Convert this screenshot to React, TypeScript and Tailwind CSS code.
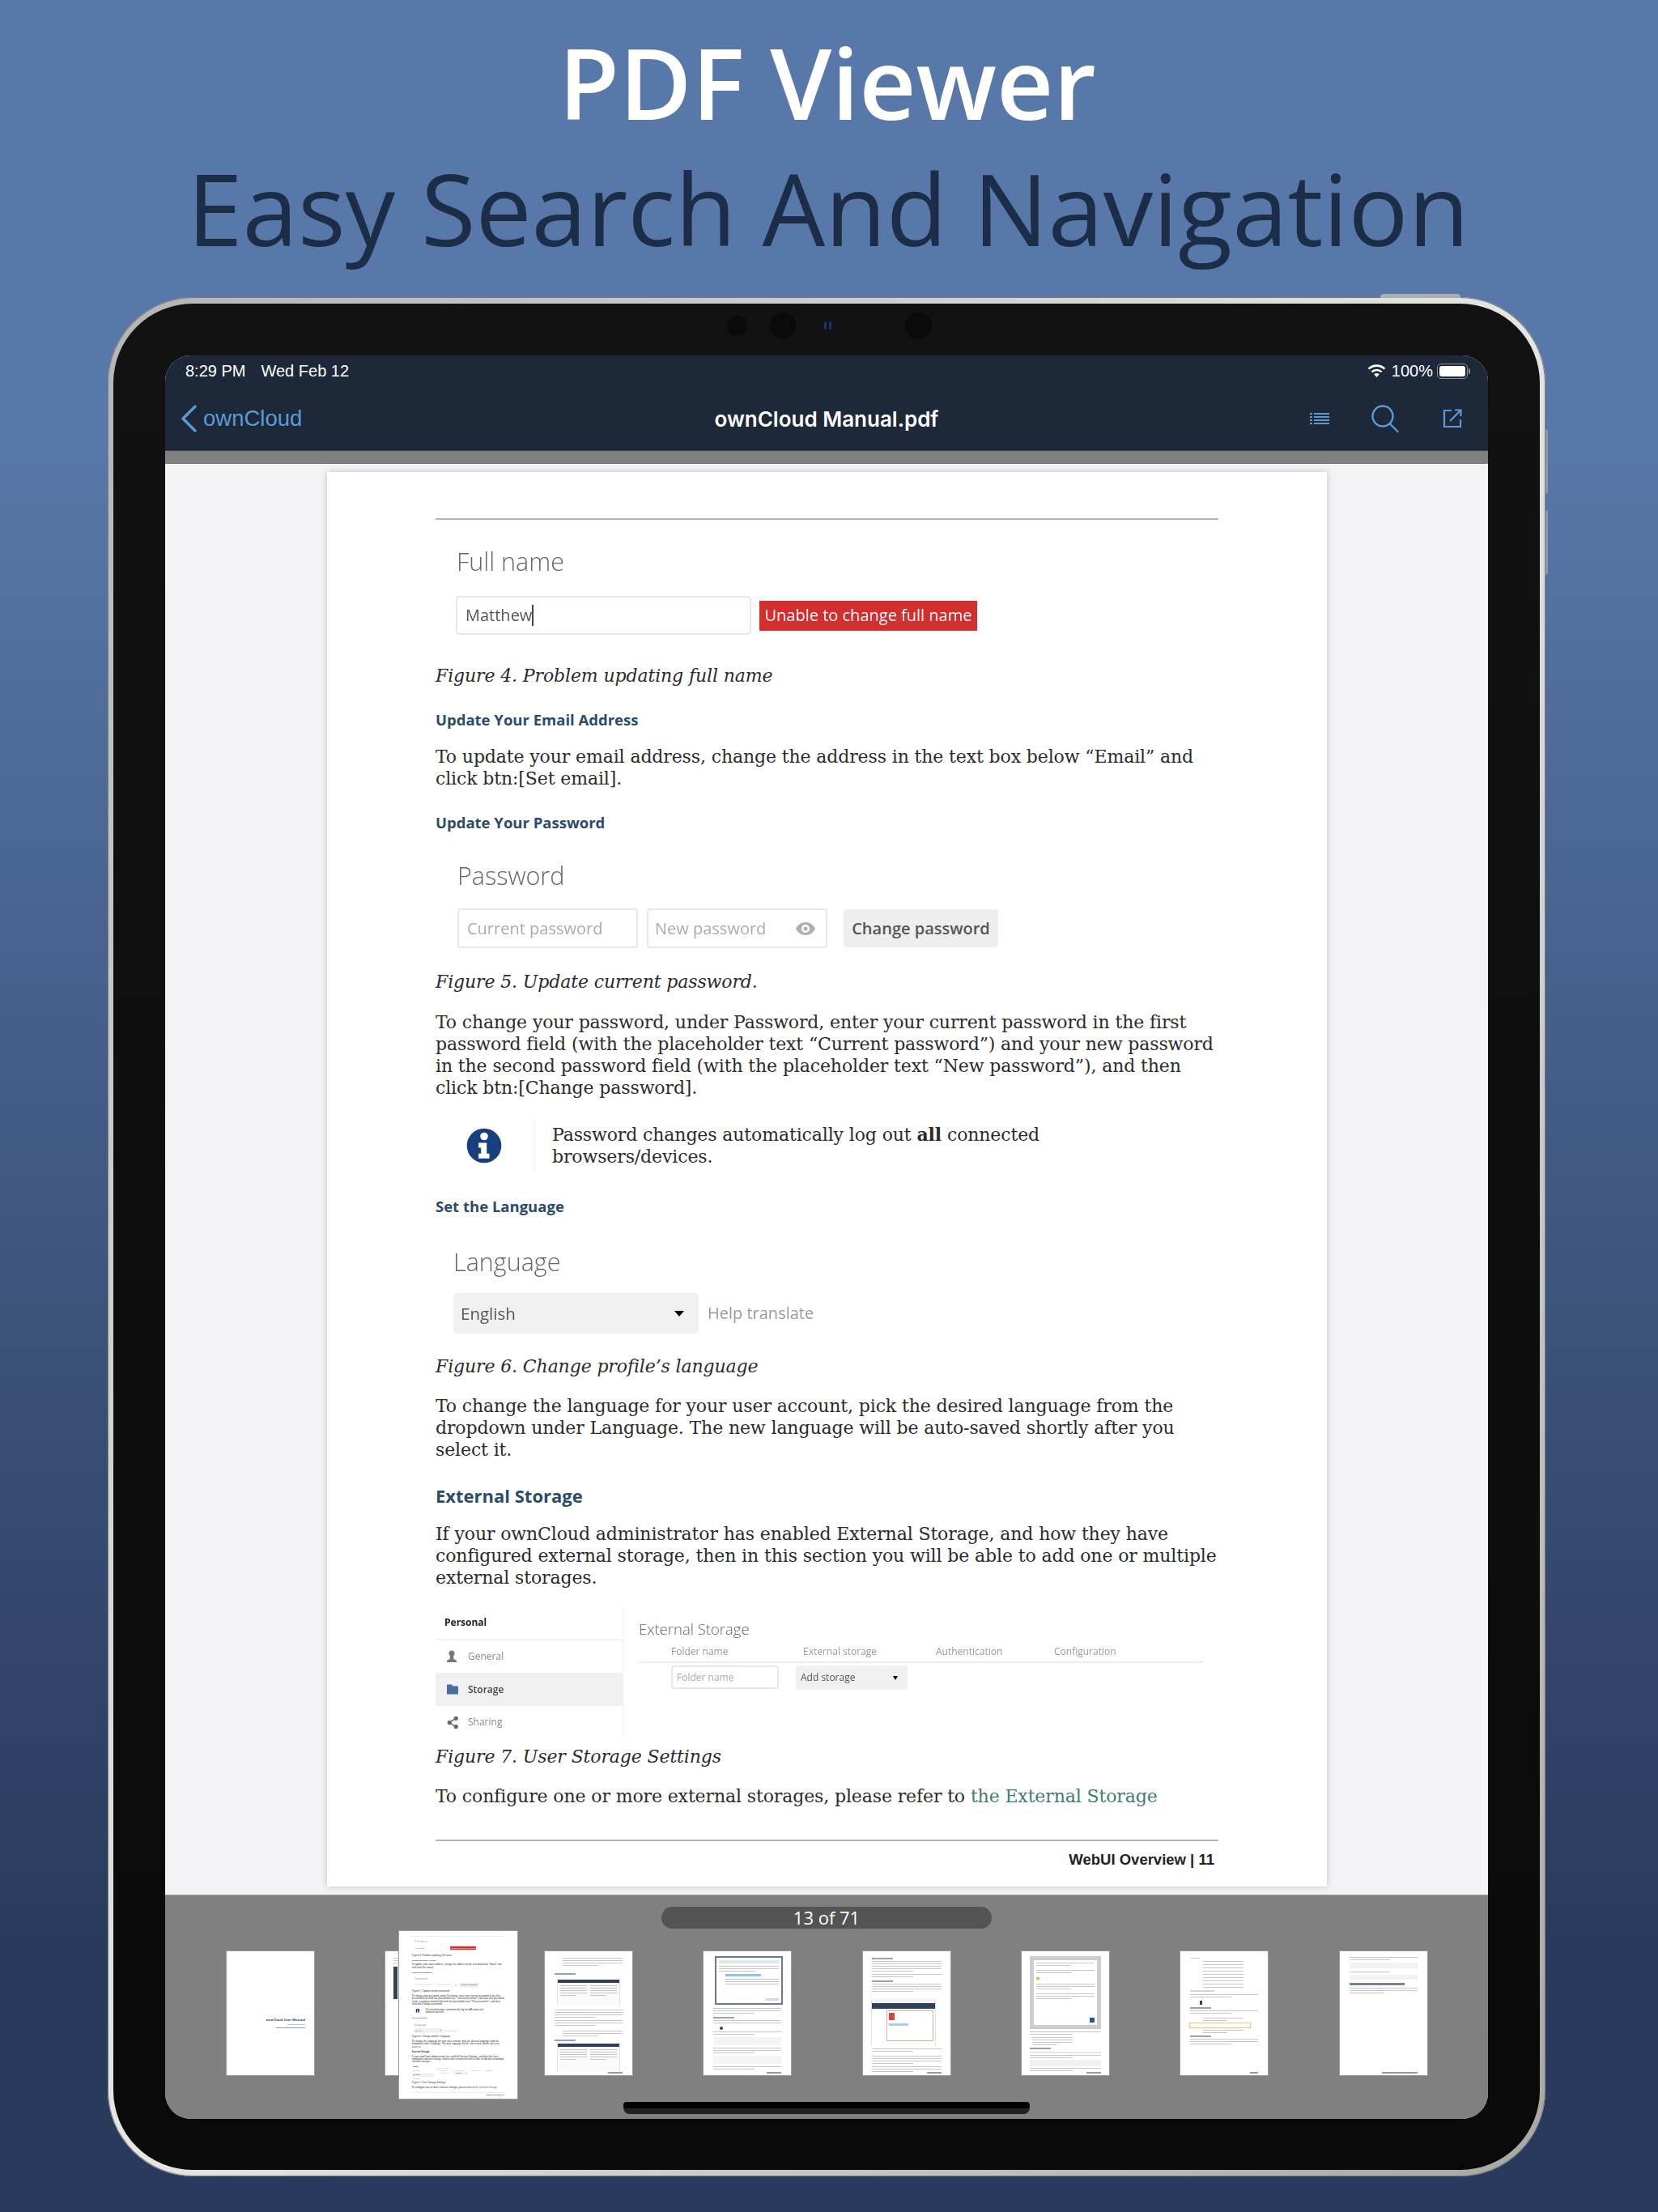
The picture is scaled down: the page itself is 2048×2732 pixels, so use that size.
const serif = 'font-["DejaVu_Serif",serif]'
const sans = 'font-["Open_Sans",sans-serif]'
const ui = "font-['Liberation_Sans',sans-serif]"

function Caption({ children, className = '' }: { children: string; className?: string }) {
  return <p className={`${serif} italic text-[22px] leading-[27px] tracking-[-0.12px] text-[#2b2b2b] ${className}`}>{children}</p>
}

function Para({ children, className = '' }: { children: React.ReactNode; className?: string }) {
  return <p className={`${serif} text-[22px] leading-[27px] tracking-[-0.12px] text-[#2b2b2b] ${className}`}>{children}</p>
}

function SubHead({ children, className = '' }: { children: string; className?: string }) {
  return <h4 className={`${sans} font-bold text-[18.500px] leading-[26px] text-[#2b4c69] ${className}`}>{children}</h4>
}

function FormTitle({ children, className = '' }: { children: string; className?: string }) {
  return <div className={`${sans} font-light text-[30.500px] leading-[44px] text-[#666] blur-[0.3px] ${className}`}>{children}</div>
}

function FieldBox({ children, className = '' }: { children: React.ReactNode; className?: string }) {
  return (
    <div className={`flex items-center border-2 border-[#e8e8e8] rounded bg-white ${className}`}>
      {children}
    </div>
  )
}

function DocPage() {
  return (
    <div className="w-[1235px] h-[1747px] bg-white pt-[57px] pl-[134px] pr-[134px] flex flex-col">
      <div className="h-[2px] bg-[#b5b5b5]" />

      <FormTitle className="mt-[29px] ml-[26px]">Full name</FormTitle>
      <div className="flex items-center mt-[21px] ml-[25px] blur-[0.3px]">
        <FieldBox className={`w-[365px] h-[48px] pl-[10px] ${sans} text-[20px] text-[#555]`}>
          <span>Matthew</span>
          <span className="w-[2px] h-[26px] bg-[#444]" />
        </FieldBox>
        <div className={`ml-[10px] w-[269px] h-[37px] bg-[#d32f2f] flex items-center justify-center whitespace-nowrap ${sans} font-medium text-[20px] text-white`}>
          Unable to change full name
        </div>
      </div>

      <Caption className="mt-[37px]">Figure 4. Problem updating full name</Caption>
      <SubHead className="mt-[28px]">Update Your Email Address</SubHead>
      <Para className="mt-[19px]">
        To update your email address, change the address in the text box below “Email” and<br />
        click btn:[Set email].
      </Para>
      <SubHead className="mt-[28px]">Update Your Password</SubHead>

      <FormTitle className="mt-[30px] ml-[27px]">Password</FormTitle>
      <div className="flex items-center mt-[19px] ml-[27px] blur-[0.3px]">
        <FieldBox className={`w-[223px] h-[49px] pl-[10px] ${sans} text-[20px] text-[#aaa]`}>Current password</FieldBox>
        <FieldBox className={`ml-[11px] w-[223px] h-[49px] pl-[8px] pr-[13px] justify-between ${sans} text-[20px] text-[#aaa]`}>
          <span>New password</span>
          <svg viewBox="0 0 24 16" className="w-[24px] h-[16px]" fill="#b0b0b0">
            <path d="M12 0C6.500 0 2.200 3.400 0 8c2.200 4.600 6.500 8 12 8s9.800-3.400 12-8c-2.200-4.600-6.500-8-12-8zm0 13a5 5 0 1 1 0-10 5 5 0 0 1 0 10zm0-7.500a2.500 2.500 0 1 0 0 5 2.500 2.500 0 0 0 0-5z" />
          </svg>
        </FieldBox>
        <div className={`ml-[20px] w-[191px] h-[47px] rounded bg-[#eeeeee] flex items-center justify-center ${sans} font-semibold text-[20px] text-[#555]`}>
          Change password
        </div>
      </div>

      <Caption className="mt-[28px]">Figure 5. Update current password.</Caption>
      <Para className="mt-[23px]">
        To change your password, under Password, enter your current password in the first<br />
        password field (with the placeholder text “Current password”) and your new password<br />
        in the second password field (with the placeholder text “New password”), and then<br />
        click btn:[Change password].
      </Para>

      <div className="flex items-center mt-[24px] h-[68px]">
        <svg viewBox="0 0 512 512" className="ml-[38px] w-[44px] h-[44px]" fill="#193f7e" fillRule="evenodd">
          <path d="M8 256a248 248 0 1 0 496 0 248 248 0 1 0-496 0zM256 66a56 56 0 1 1 0 112 56 56 0 0 1 0-112zM176 214h118v156h38v70H176v-70h36v-86h-36z" />
        </svg>
        <div className="ml-[39px] w-px self-stretch bg-[#eeeeee]" />
        <Para className="ml-[22px]">
          Password changes automatically log out <b>all</b> connected<br />
          browsers/devices.
        </Para>
      </div>

      <SubHead className="mt-[28px]">Set the Language</SubHead>

      <FormTitle className="mt-[33px] ml-[22px]">Language</FormTitle>
      <div className="flex items-center mt-[17px] ml-[22px] blur-[0.3px]">
        <div className={`w-[303px] h-[50px] rounded bg-[#f0f0f0] flex items-center justify-between pl-[9px] pr-[18px] ${sans} text-[20.500px] text-[#555]`}>
          <span>English</span>
          <span className="border-x-[6px] border-x-transparent border-t-[7px] border-t-black" />
        </div>
        <span className={`ml-[11px] ${sans} text-[20px] text-[#999]`}>Help translate</span>
      </div>

      <Caption className="mt-[27px]">Figure 6. Change profile’s language</Caption>
      <Para className="mt-[22px]">
        To change the language for your user account, pick the desired language from the<br />
        dropdown under Language. The new language will be auto-saved shortly after you<br />
        select it.
      </Para>
      <h3 className={`mt-[27px] ${sans} font-bold text-[22px] leading-[32px] text-[#2b4c69]`}>External Storage</h3>
      <Para className="mt-[18px]">
        If your ownCloud administrator has enabled External Storage, and how they have<br />
        configured external storage, then in this section you will be able to add one or multiple<br />
        external storages.
      </Para>

      <div className={`flex mt-[21px] h-[164px] blur-[0.3px] ${sans}`}>
        <div className="w-[232px] border-r border-[#f0f0f0] flex flex-col text-[12px]">
          <div className="h-[43px] pl-[11px] pt-[12px] font-bold text-[12px] text-[#222] border-b-2 border-[#f4f4f4]">Personal</div>
          <div className="h-[40px] flex items-center pl-[14px] gap-[14px] text-[#888]">
            <svg viewBox="0 0 12 16" className="w-[12px] h-[16px]" fill="#777"><circle cx="6" cy="4" r="3.500" /><path d="M4 7h4l.500 4 3.500 2v2H0v-2l3.500-2z" /></svg>
            General
          </div>
          <div className="h-[41px] bg-[#f0f0f0] flex items-center pl-[14px] gap-[12px] font-semibold text-[#444]">
            <svg viewBox="0 0 14 12" className="w-[14px] h-[13px]" fill="#4a6d9d"><path d="M0 0h6l1.500 2H14v10H0z" /></svg>
            Storage
          </div>
          <div className="h-[40px] flex items-center pl-[14px] gap-[12px] text-[#888]">
            <svg viewBox="0 0 14 16" className="w-[14px] h-[15px]" fill="none" stroke="#666" strokeWidth="1.600"><path d="M11 2.500 3 8l8 5.500" /><circle cx="11.500" cy="2.500" r="2" fill="#666" /><circle cx="3" cy="8" r="2" fill="#666" /><circle cx="11.500" cy="13.500" r="2" fill="#666" /></svg>
            Sharing
          </div>
        </div>
        <div className="flex-1 pl-[19px] pr-[19px] pt-[16px]">
          <div className="font-light text-[18.500px] leading-[26px] text-[#666]">External Storage</div>
          <div className="grid grid-cols-[163px_164px_146px_1fr] pl-[40px] mt-[6px] h-[19px] text-[12px] leading-[18px] text-[#999] border-b-2 border-[#ececec] box-content pb-[2px]">
            <span>Folder name</span>
            <span>External storage</span>
            <span>Authentication</span>
            <span>Configuration</span>
          </div>
          <div className="flex pl-[40px] mt-[3px]">
            <FieldBox className="w-[133px] h-[29px] pl-[5px] text-[12px] text-[#aaa]">Folder name</FieldBox>
            <div className="ml-[21px] w-[138px] h-[30px] bg-[#f0f0f0] rounded flex items-center justify-between pl-[6px] pr-[12px] text-[12px] text-[#555]">
              <span>Add storage</span>
              <span className="border-x-[3px] border-x-transparent border-t-[5px] border-t-black" />
            </div>
          </div>
        </div>
      </div>

      <Caption className="mt-[9px]">Figure 7. User Storage Settings</Caption>
      <Para className="mt-[22px]">
        To configure one or more external storages, please refer to <span className="text-[#3f7d6e]">the External Storage</span>
      </Para>

      <div className="h-[2px] bg-[#b5b5b5] mt-[40px]" />
      <div className={`mt-[12px] text-right pr-[5px] ${ui} font-bold text-[18.500px] leading-[22px] text-[#222]`}>
        WebUI Overview | 11
      </div>
    </div>
  )
}

function Bars({ n, w = 'w-full', last = 'w-3/5', className = '' }: { n: number; w?: string; last?: string; className?: string }) {
  return (
    <div className={`flex flex-col gap-[2px] ${className}`}>
      {Array.from({ length: n }, (_, i) => (
        <div key={i} className={`h-px bg-[#c6c6c6] ${i === n - 1 ? last : w}`} />
      ))}
    </div>
  )
}

function Tiny({ className = '' }: { className?: string }) {
  return <div className={`h-[2px] w-[26px] bg-[#8ea4b8] ${className}`} />
}

function Footer({ className = 'w-[18px]' }: { className?: string }) {
  return <div className={`mt-auto mb-[2px] h-[2px] self-end bg-[#999] ${className}`} />
}

function Thumb({ children, className = '' }: { children?: React.ReactNode; className?: string }) {
  return (
    <div className={`w-[110px] h-[155px] shrink-0 bg-white border border-[#9a9a9a] overflow-hidden`}>
      <div className={`w-full h-full flex flex-col px-[12px] blur-[0.4px] ${className}`}>
        {children}
      </div>
    </div>
  )
}

function ScreenShot({ className = '' }: { className?: string }) {
  return (
    <div className={`w-[78px] ml-[3px] bg-[#fafafa] border-x border-[#e2e2e2] ${className}`}>
      <div className="h-[4px] bg-[#2f3f5c]" />
      <div className="grid grid-cols-2 gap-[4px] p-[3px]">
        <Bars n={5} />
        <Bars n={5} />
      </div>
    </div>
  )
}

function ThumbStrip() {
  return (
    <div className="flex mt-[27px] pl-[75px] gap-[86.400px]">
      <Thumb className="items-end pt-[82px] !px-[11px]">
        <span className={`${sans} font-bold text-[4.200px] leading-[6px] text-[#2b4c69]`}>ownCloud User Manual</span>
        <div className="h-px w-[22px] bg-[#b7c6d4] mt-[2px]" />
        <div className="h-px w-[36px] bg-[#8ea2b6] mt-[3px]" />
      </Thumb>

      <Thumb className="!px-[10px] pt-[8px]">
        <Bars n={3} />
        <div className="w-[5px] h-[40px] bg-[#2f3f5c] mt-[4px]" />
      </Thumb>

      <Thumb className="pt-[8px]">
        <Bars n={4} className="ml-[10px]" />
        <Tiny className="mt-[9px]" />
        <ScreenShot className="mt-[6px] h-[32px]" />
        <Bars n={4} className="mt-[5px]" />
        <Bars n={3} className="mt-[3px]" />
        <Bars n={3} className="mt-[6px] ml-[10px]" />
        <Tiny className="mt-[4px]" />
        <ScreenShot className="mt-[3px] h-[34px]" />
        <Footer />
      </Thumb>

      <Thumb className="pt-[6px]">
        <div className="h-[60px] ml-[2px] w-[84px] border-2 border-[#66799a] bg-white p-[3px] flex flex-col">
          <div className="h-[4px] bg-[#dfe6ee]" />
          <Bars n={3} className="mt-[3px]" />
          <div className="h-[3px] w-[44px] bg-[#8cc2f0] ml-[8px] mt-[3px]" />
          <Bars n={3} className="mt-[3px] ml-[8px]" last="w-full" />
          <div className="mt-auto h-[3px] w-[16px] self-end bg-[#c9dce8]" />
        </div>
        <Bars n={3} className="mt-[4px]" />
        <Tiny className="mt-[4px]" />
        <Bars n={2} className="mt-[2px]" last="w-full" />
        <div className="w-[4px] h-[4px] rounded-full bg-[#1d4a8a] mt-[4px] ml-[8px]" />
        <Bars n={2} className="mt-[2px]" />
        <div className="h-[10px] bg-[#f4f4f4] mt-[3px]" />
        <Bars n={3} className="mt-[3px]" />
        <div className="h-[10px] bg-[#f4f4f4] mt-[3px]" />
        <Bars n={2} className="mt-[3px]" />
        <Footer />
      </Thumb>

      <Thumb className="pt-[8px] !px-[11px]">
        <Tiny />
        <Bars n={5} className="mt-[2px]" />
        <Bars n={2} className="mt-[3px]" />
        <Tiny className="mt-[4px]" />
        <Bars n={4} className="mt-[2px]" />
        <div className="mt-[9px] w-[80px] h-[60px] -ml-[1px] bg-white border-x border-[#e0e0e0] flex flex-col">
          <div className="h-[5px] bg-[#f4f4f4]" />
          <div className="h-[7px] bg-[#2f3f5c]" />
          <div className="flex mt-[2px]">
            <div className="w-[18px]" />
            <div className="flex-1 h-[38px] border border-[#eba99a] mr-[2px] p-[2px]">
              <div className="w-[7px] h-[9px] bg-[#d9423a]" />
              <div className="h-[3px] w-[24px] bg-[#a8cdf0] mt-[4px]" />
            </div>
          </div>
        </div>
        <Bars n={2} className="mt-[3px]" />
        <Bars n={4} className="mt-[5px]" />
        <Bars n={3} className="mt-[3px]" />
        <Footer />
      </Thumb>

      <Thumb className="pt-[6px] !px-[10px]">
        <div className="h-[90px] bg-[#cdcdcd] p-[5px]">
          <div className="h-full bg-white p-[3px] flex flex-col gap-[5px]">
            <Bars n={2} />
            <Bars n={2} />
            <div className="w-[4px] h-[3px] bg-[#f0b040]" />
            <Bars n={3} />
            <Bars n={3} />
            <div className="mt-auto h-[6px] w-[6px] self-end bg-[#2f5688]" />
          </div>
        </div>
        <Bars n={2} className="mt-[3px]" />
        <Bars n={4} className="mt-[3px] ml-[3px] w-[50px]" />
        <Tiny className="mt-[3px]" />
        <div className="h-[2px] bg-[#e5e5e5] mt-[3px]" />
        <Bars n={2} className="mt-[2px]" />
        <div className="h-[8px] bg-[#f0f0f0] mt-[2px]" />
        <Bars n={2} className="mt-[2px]" />
        <Footer />
      </Thumb>

      <Thumb className="pt-[8px]">
        <Bars n={1} last="w-[10px]" className="ml-[1px]" />
        <Bars n={9} last="w-full" className="mt-[3px] ml-[16px] w-[50px] !gap-[3px]" />
        <div className="h-[2px] w-[30px] bg-[#d4d4d4] mt-[3px]" />
        <Bars n={2} className="mt-[3px]" />
        <div className="w-[3px] h-[5px] bg-[#444] mt-[4px] ml-[12px]" />
        <Tiny className="mt-[3px]" />
        <Bars n={2} className="mt-[2px]" />
        <Bars n={2} className="mt-[5px] ml-[16px] w-[50px]" />
        <div className="h-[7px] w-[76px] -ml-[1px] border border-[#f2c27c] mt-[2px]" />
        <Bars n={2} className="mt-[2px] ml-[16px] w-[50px]" />
        <Tiny className="mt-[3px]" />
        <Bars n={3} className="mt-[2px]" />
        <Footer className="w-[10px]" />
      </Thumb>

      <Thumb className="pt-[7px]">
        <Bars n={2} />
        <div className="h-[7px] bg-[#f2f2f2] mt-[3px]" />
        <Bars n={1} last="w-3/5" className="mt-[4px]" />
        <div className="h-[6px] bg-[#f2f2f2] mt-[3px]" />
        <div className="h-[3px] w-[68px] bg-[#6d869f] mt-[4px]" />
        <Bars n={3} className="mt-[3px]" last="w-1/2" />
        <Footer className="w-[44px]" />
      </Thumb>
    </div>
  )
}

export default function App() {
  return (
    <div className="w-[2048px] h-[2732px] overflow-hidden flex flex-col bg-gradient-to-b from-[#5878a9] from-20% to-[#293a5d] to-88%">
      <header className={`h-[363px] shrink-0 flex flex-col items-center ${sans}`}>
        <h1 className="font-semibold text-[122px] leading-[156px] mt-[23px] pr-[4px] text-white">PDF Viewer</h1>
        <h2 className="font-normal text-[123px] leading-[156px] pr-[2px] text-[#1c2d47]">Easy Search And Navigation</h2>
      </header>

      {/* device */}
      <div className="relative ml-[133px] mt-[4px] w-[1776px] h-[2321px] rounded-[106px] bg-gradient-to-br from-[#b4b4b4] via-[#e6e6e2] to-[#a8a8a2] shadow-[inset_0_0_0_1px_#787c84] px-[7px] pt-[8px] pb-[8px]">
        <div className="absolute -top-[4px] left-[1572px] w-[99px] h-[5px] rounded-t-sm bg-[#a9adb4]" />
        <div className="absolute top-[163px] -right-[3px] w-[3px] h-[80px] rounded-r bg-[#8f98a6]" />
        <div className="absolute top-[263px] -right-[3px] w-[3px] h-[80px] rounded-r bg-[#8f98a6]" />

        <div className="relative w-full h-full rounded-[98px] bg-gradient-to-b from-[#121212] to-[#0a0a0a] pt-[64px] px-[64px] pb-[63px]">
          {/* sensors */}
          <span className="absolute top-[15px] left-[758px] w-[25px] h-[25px] rounded-full bg-[#0a0a0a]" />
          <span className="absolute top-[11px] left-[811px] w-[32px] h-[33px] rounded-full bg-[#0a0a0a]" />
          <span className="absolute top-[22px] left-[878px] w-[3px] h-[10px] rounded-full bg-[#14376e]" />
          <span className="absolute top-[22px] left-[884px] w-[3px] h-[10px] rounded-full bg-[#14376e]" />
          <span className="absolute top-[11px] left-[978px] w-[33px] h-[33px] rounded-full bg-[#0a0a0a]" />

          <div className="relative w-full h-full rounded-[32px] overflow-hidden bg-[#f2f2f7] flex flex-col">
            {/* status and nav */}
            <div className="h-[118px] shrink-0 bg-[#1d2839] border-b border-[#3c4350] flex flex-col">
              <div className={`h-[38px] flex items-center pl-[25px] pr-[22px] text-white ${ui} text-[20px]`}>
                <span>8:29 PM</span>
                <span className="ml-[19px]">Wed Feb 12</span>
                <svg viewBox="0 0 24 17" className="ml-auto w-[23px] h-[16px]" fill="none" stroke="white" strokeWidth="2.800">
                  <path d="M1.500 6a15 15 0 0 1 21 0" />
                  <path d="M5.500 10a9.500 9.500 0 0 1 13 0" />
                  <path d="M12 17 8.500 13a5 5 0 0 1 7 0z" fill="white" stroke="none" />
                </svg>
                <span className="ml-[7px]">100%</span>
                <span className="ml-[5px] w-[38px] h-[19px] rounded-[5px] border border-[#8b8f96] p-[2px]">
                  <span className="block w-full h-full rounded-[3px] bg-white" />
                </span>
                <span className="ml-[1px] w-[2px] h-[7px] rounded-r bg-[#8b8f96]" />
              </div>
              <div className="relative flex-1 flex items-center pl-[19px] pr-[32px]">
                <svg viewBox="0 0 21 34" className="w-[21px] h-[34px]" fill="none" stroke="#5b9bd5" strokeWidth="3.400" strokeLinecap="round" strokeLinejoin="round">
                  <path d="M18 2 3 17l15 15" />
                </svg>
                <span className={`ml-[7px] ${ui} text-[27.500px] text-[#5b9bd5]`}>ownCloud</span>
                <span className="absolute left-0 right-0 pt-[1px] text-center font-['Inter',sans-serif] font-semibold text-[26px] text-white pointer-events-none">
                  ownCloud Manual.pdf
                </span>
                <div className="ml-auto flex items-center text-[#5b9bd5]">
                  <svg viewBox="0 0 24 14" className="w-[24px] h-[14px]" fill="currentColor">
                    <path d="M0 0h3v2H0zM5 0h19v2H5zM0 4h3v2H0zM5 4h19v2H5zM0 8h3v2H0zM5 8h19v2H5zM0 12h3v2H0zM5 12h19v2H5z" />
                  </svg>
                  <svg viewBox="0 0 34 34" className="ml-[52px] w-[34px] h-[34px]" fill="none" stroke="currentColor" strokeWidth="2.400" strokeLinecap="round">
                    <circle cx="14" cy="14" r="12.500" />
                    <path d="M23 23.500 32.500 33" />
                  </svg>
                  <svg viewBox="0 0 24 24" className="ml-[54px] w-[24px] h-[24px]" fill="none" stroke="currentColor" strokeWidth="2.200">
                    <path d="M11 2H2v20h20v-9" />
                    <path d="M9 15 22 2M15 1.500h7.500V9" />
                  </svg>
                </div>
              </div>
            </div>

            <div className="h-[16px] shrink-0 bg-[#808080]" />

            <div className="h-[10px] shrink-0" />
            <div className="h-[1757px] shrink-0 pl-[200px]">
              <div className="w-fit shadow-[0_0_8px_rgba(0,0,0,0.2)]">
                <DocPage />
              </div>
            </div>

            {/* thumbnails */}
            <div className="relative flex-1 bg-[#808080] border-t border-[#9a9a9a] pt-[14px]">
              <div className={`mx-auto w-[408px] h-[27px] rounded-full bg-[#545454] flex items-center justify-center pb-[2px] ${sans} text-[22px] leading-none text-white`}>
                13 of 71
              </div>
              <ThumbStrip />
              <div className="absolute left-[289px] top-[44px] w-[146px] h-[207px] overflow-hidden bg-white outline outline-1 outline-[#9a9a9a]">
                <div className="origin-top-left scale-[0.1182] blur-[1.500px]">
                  <DocPage />
                </div>
              </div>
              <div className="absolute left-[566px] top-[255px] w-[502px] h-[15px] rounded-full bg-[#222]">
                <div className="h-[8px] rounded-full bg-black" />
              </div>
            </div>
          </div>
        </div>
      </div>
    </div>
  )
}
